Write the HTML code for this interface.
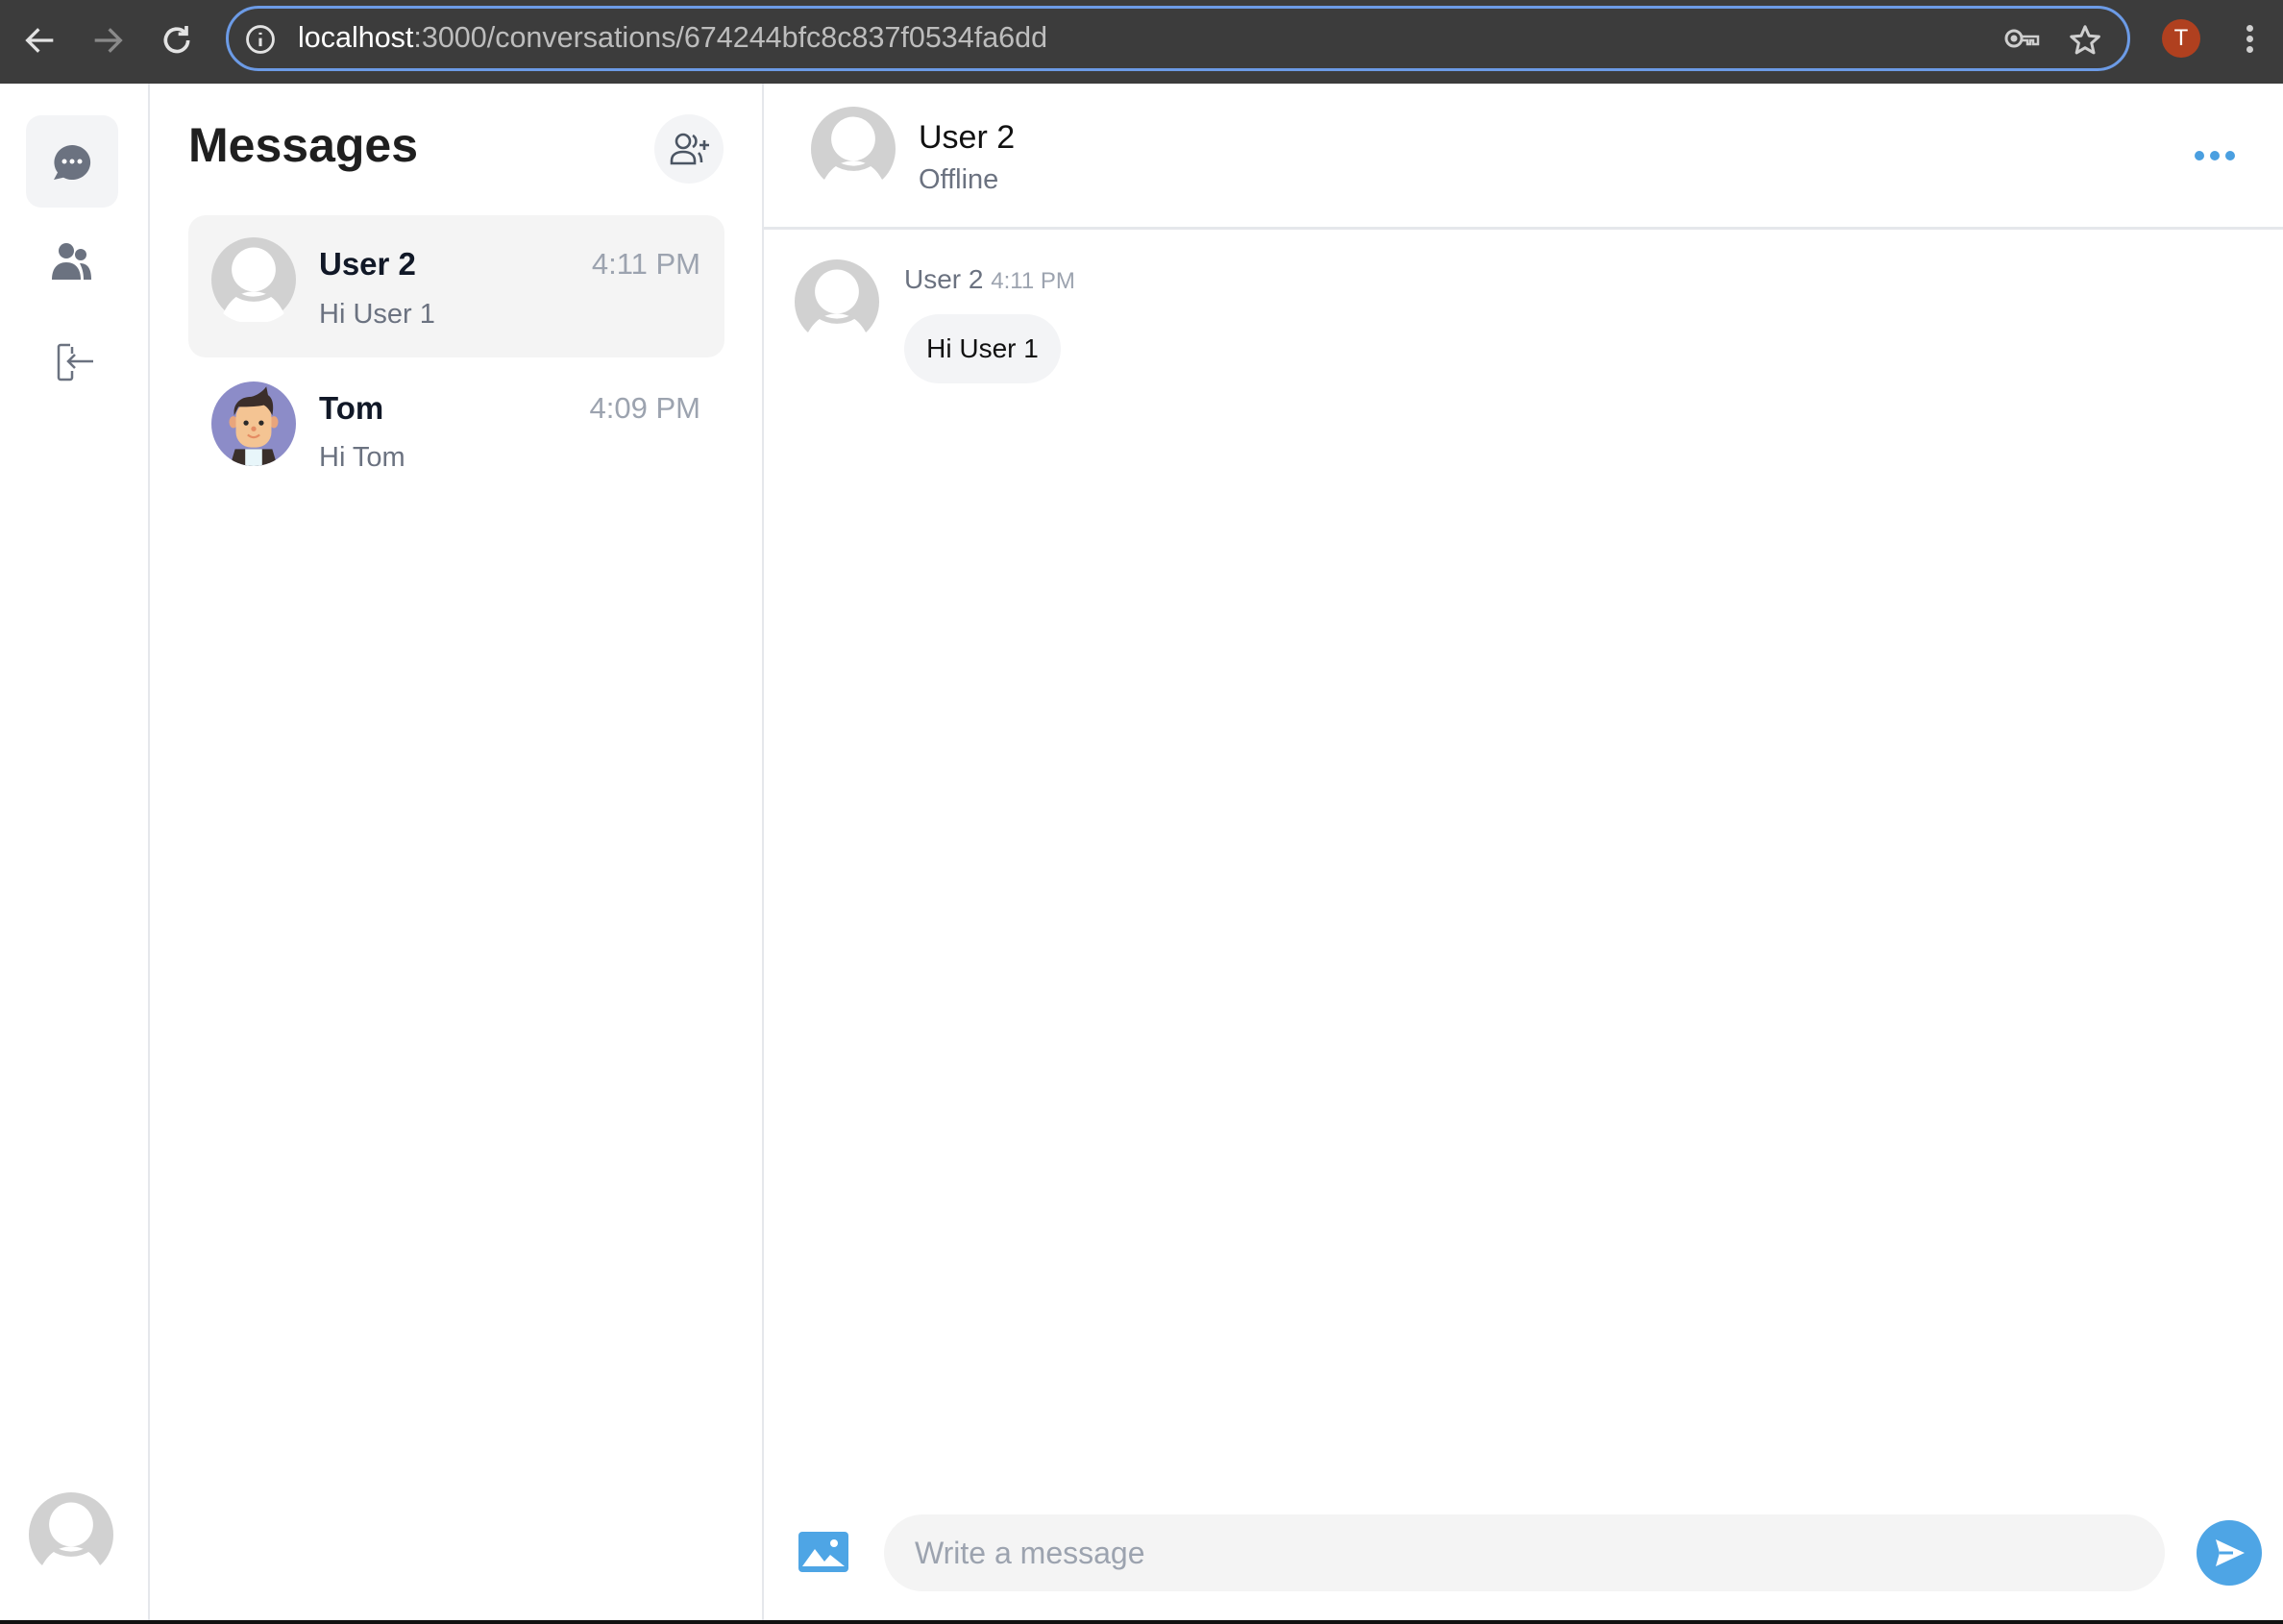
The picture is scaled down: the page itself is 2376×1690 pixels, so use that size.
<!DOCTYPE html>
<html><head><meta charset="utf-8"><style>
*{box-sizing:border-box;margin:0;padding:0}
body{width:2376px;height:1690px;overflow:hidden;background:#fff;font-family:"Liberation Sans",Arial,sans-serif;position:relative}
.abs{position:absolute}
.top{left:0;top:0;width:2376px;height:87px;background:#3c3c3c}
.url{left:235px;top:6px;width:1982px;height:68px;border:3px solid #6c9be6;border-radius:34px}
.urltext{left:310px;top:22px;font-size:30.5px;color:#bdbdbd;white-space:nowrap}
.nav{left:0;top:87px;width:156px;height:1600px;border-right:2px solid #e5e7eb}
.mid{left:156px;top:87px;width:639px;height:1600px;border-right:2px solid #e5e7eb}
.hdr{left:795px;top:87px;width:1581px;height:152px;border-bottom:3px solid #e5e7eb}
.t{white-space:nowrap}
.bottomband{left:0;top:1686px;width:2376px;height:4px;background:#111}
</style></head><body>
<div class="abs top"></div>
<svg class="abs" style="left:22px;top:22px" width="40" height="40" viewBox="0 0 24 24"><path d="M20 12H5M11 5l-7 7 7 7" stroke="#e3e3e3" stroke-width="2" fill="none"/></svg>
<svg class="abs" style="left:92px;top:22px" width="40" height="40" viewBox="0 0 24 24"><path d="M4 12h15M13 5l7 7-7 7" stroke="#8a8a8a" stroke-width="2" fill="none"/></svg>
<svg class="abs" style="left:164px;top:22px" width="40" height="40" viewBox="0 0 24 24"><path d="M19 12a7 7 0 1 1-2-5" stroke="#e3e3e3" stroke-width="2.2" fill="none"/><path d="M18 3v5h-5" stroke="#e3e3e3" stroke-width="2.2" fill="none"/></svg>
<div class="abs url"></div>
<svg class="abs" style="left:254px;top:24px" width="34" height="34" viewBox="0 0 24 24"><circle cx="12" cy="12" r="9.5" stroke="#e3e3e3" stroke-width="2" fill="none"/><path d="M12 11v6M12 7v1.5" stroke="#e3e3e3" stroke-width="2.2"/></svg>
<div class="abs urltext"><span style="color:#fff">localhost</span>:3000/conversations/674244bfc8c837f0534fa6dd</div>
<svg class="abs" style="left:2086px;top:28px" width="38" height="24" viewBox="0 0 38 24"><circle cx="10" cy="12" r="8" stroke="#cfcfcf" stroke-width="3" fill="none"/><circle cx="10" cy="12" r="3.5" fill="#cfcfcf"/><path d="M18 10h17v8h-5v-4h-3v4h-3v-4h-6" stroke="#cfcfcf" stroke-width="2.5" fill="none"/></svg>
<svg class="abs" style="left:2152px;top:24px" width="36" height="36" viewBox="0 0 24 24"><path d="M12 2.5l2.8 6.3 6.8.6-5.1 4.5 1.5 6.7L12 17.1l-5.9 3.5 1.5-6.7-5.1-4.5 6.8-.6z" stroke="#cfcfcf" stroke-width="2" fill="none" stroke-linejoin="round"/></svg>
<div class="abs" style="left:2250px;top:20px;width:40px;height:40px;border-radius:50%;background:#b0401f;color:#fff;font-size:24px;text-align:center;line-height:40px">T</div>
<div class="abs" style="left:2338px;top:26px;width:7px;height:7px;border-radius:50%;background:#cfcfcf"></div>
<div class="abs" style="left:2338px;top:37px;width:7px;height:7px;border-radius:50%;background:#cfcfcf"></div>
<div class="abs" style="left:2338px;top:48px;width:7px;height:7px;border-radius:50%;background:#cfcfcf"></div>

<div class="abs nav"></div>
<div class="abs mid"></div>
<div class="abs hdr"></div>

<div class="abs" style="left:27px;top:120px;width:96px;height:96px;border-radius:16px;background:#f3f4f6"></div>
<svg class="abs" style="left:54px;top:149px" width="42" height="42" viewBox="0 0 42 42"><path d="M21 2a19 18 0 1 1-9 33.8L2 38l4-7.5A19 18 0 0 1 21 2z" fill="#6b7280"/><circle cx="13" cy="19" r="2.5" fill="#fff"/><circle cx="21" cy="19" r="2.5" fill="#fff"/><circle cx="29" cy="19" r="2.5" fill="#fff"/></svg>
<svg class="abs" style="left:53px;top:252px" width="44" height="40" viewBox="0 0 44 40"><circle cx="16" cy="9" r="8" fill="#6b7280"/><circle cx="31" cy="13" r="6" fill="#6b7280"/><path d="M1 39c0-12 6-18 15-18s15 6 15 18z" fill="#6b7280"/><path d="M30 22c8 0 12 5 12 17h-8c0-8-2-13-4-17z" fill="#6b7280"/></svg>
<svg class="abs" style="left:57px;top:356px" width="42" height="42" viewBox="0 0 42 42"><path d="M16 3H6a2 2 0 0 0-2 2v32a2 2 0 0 0 2 2h10a2 2 0 0 0 2-2v-7M18 12V5" stroke="#6b7280" stroke-width="2.5" fill="none"/><path d="M40 20H14M21 13l-7 7 7 7" stroke="#6b7280" stroke-width="2.5" fill="none"/></svg>
<svg class="abs" style="left:30px;top:1553px" width="88" height="88" viewBox="0 0 100 100"><circle cx="50" cy="50" r="50" fill="#d1d1d1"/><circle cx="50" cy="38" r="26" fill="#fff"/><path d="M14 90c8-17 20-26 36-26s28 9 36 26c-9 8-22 12-36 12s-27-4-36-12z" fill="#fff"/><path d="M28 66c7 5 15 7 22 7s15-2 22-7" stroke="#d1d1d1" stroke-width="6" fill="none"/><rect x="0" y="86" width="100" height="14" fill="#fff"/></svg>

<div class="abs t" style="left:196px;top:122px;font-size:50px;font-weight:bold;color:#1f1f1f">Messages</div>
<div class="abs" style="left:681px;top:119px;width:72px;height:72px;border-radius:50%;background:#f3f4f6"></div>
<svg class="abs" style="left:697px;top:138px" width="42" height="34" viewBox="0 0 42 34"><circle cx="14" cy="9" r="7" stroke="#4b5563" stroke-width="2.6" fill="none"/><path d="M2 32v-3c0-6 5-9 12-9s12 3 12 9v3z" stroke="#4b5563" stroke-width="2.6" fill="none"/><path d="M24 3a7 7 0 0 1 0 12M30 21c2 2 3 5 3 10" stroke="#4b5563" stroke-width="2.6" fill="none"/><path d="M36 8v10M31 13h10" stroke="#4b5563" stroke-width="2.6"/></svg>

<div class="abs" style="left:196px;top:224px;width:558px;height:148px;border-radius:18px;background:#f4f4f4"></div>
<svg class="abs" style="left:220px;top:247px" width="88" height="88" viewBox="0 0 100 100"><circle cx="50" cy="50" r="50" fill="#d1d1d1"/><circle cx="50" cy="38" r="26" fill="#fff"/><path d="M14 90c8-17 20-26 36-26s28 9 36 26c-9 8-22 12-36 12s-27-4-36-12z" fill="#fff"/><path d="M28 66c7 5 15 7 22 7s15-2 22-7" stroke="#d1d1d1" stroke-width="6" fill="none"/></svg>
<div class="abs t" style="left:332px;top:256px;font-size:33px;font-weight:bold;color:#111827">User 2</div>
<div class="abs t" style="left:729px;top:257px;font-size:31px;color:#9ca3af;transform:translateX(-100%)">4:11 PM</div>
<div class="abs t" style="left:332px;top:311px;font-size:29px;color:#6b7280">Hi User 1</div>

<svg class="abs" style="left:220px;top:397px" width="88" height="88" viewBox="0 0 100 100"><defs><clipPath id="c1"><circle cx="50" cy="50" r="50"/></clipPath></defs><circle cx="50" cy="50" r="50" fill="#8c8cc8"/><g clip-path="url(#c1)"><path d="M22 100l6-20h44l6 20z" fill="#3a2f2b"/><path d="M40 80h20v20H40z" fill="#e8f6fa"/><ellipse cx="26" cy="48" rx="5" ry="7" fill="#e8a57c"/><ellipse cx="74" cy="48" rx="5" ry="7" fill="#e8a57c"/><rect x="29" y="24" width="42" height="54" rx="18" fill="#f4c493"/><path d="M27 40c-2-14 8-22 20-22 6-1 14-6 18-12l2 10c6 4 7 13 5 24-3-6-6-10-10-12-10 2-22 2-30 2z" fill="#3b2e2a"/><circle cx="41" cy="49" r="3" fill="#2a2a2a"/><circle cx="59" cy="49" r="3" fill="#2a2a2a"/><circle cx="50" cy="56" r="3" fill="#e58c63"/><path d="M43 63q7 6 14 0" stroke="#e58c63" stroke-width="2.5" fill="none"/></g></svg>
<div class="abs t" style="left:332px;top:406px;font-size:33px;font-weight:bold;color:#111827">Tom</div>
<div class="abs t" style="left:729px;top:407px;font-size:31px;color:#9ca3af;transform:translateX(-100%)">4:09 PM</div>
<div class="abs t" style="left:332px;top:460px;font-size:29px;color:#6b7280">Hi Tom</div>

<svg class="abs" style="left:844px;top:111px" width="88" height="88" viewBox="0 0 100 100"><circle cx="50" cy="50" r="50" fill="#d1d1d1"/><circle cx="50" cy="38" r="26" fill="#fff"/><path d="M14 90c8-17 20-26 36-26s28 9 36 26c-9 8-22 12-36 12s-27-4-36-12z" fill="#fff"/><path d="M28 66c7 5 15 7 22 7s15-2 22-7" stroke="#d1d1d1" stroke-width="6" fill="none"/><rect x="0" y="86" width="100" height="14" fill="#fff"/></svg>
<div class="abs t" style="left:956px;top:124px;font-size:34px;color:#111">User 2</div>
<div class="abs t" style="left:956px;top:171px;font-size:29px;color:#6b7280">Offline</div>
<div class="abs" style="left:2284px;top:157px;width:10px;height:10px;border-radius:50%;background:#4a9fe0"></div>
<div class="abs" style="left:2300px;top:157px;width:10px;height:10px;border-radius:50%;background:#4a9fe0"></div>
<div class="abs" style="left:2316px;top:157px;width:10px;height:10px;border-radius:50%;background:#4a9fe0"></div>

<svg class="abs" style="left:827px;top:270px" width="88" height="88" viewBox="0 0 100 100"><circle cx="50" cy="50" r="50" fill="#d1d1d1"/><circle cx="50" cy="38" r="26" fill="#fff"/><path d="M14 90c8-17 20-26 36-26s28 9 36 26c-9 8-22 12-36 12s-27-4-36-12z" fill="#fff"/><path d="M28 66c7 5 15 7 22 7s15-2 22-7" stroke="#d1d1d1" stroke-width="6" fill="none"/><rect x="0" y="86" width="100" height="14" fill="#fff"/></svg>
<div class="abs t" style="left:941px;top:275px;font-size:28px;color:#6b7280">User 2 <span style="font-size:24px;color:#9ca3af">4:11 PM</span></div>
<div class="abs t" style="left:941px;top:327px;width:163px;height:72px;border-radius:36px;background:#f3f4f6;font-size:28px;color:#111;line-height:72px;text-align:center">Hi User 1</div>

<svg class="abs" style="left:831px;top:1594px" width="52" height="42" viewBox="0 0 52 42"><rect x="0" y="0" width="52" height="42" rx="4" fill="#4ea5e5"/><circle cx="37" cy="12" r="4" fill="#fff"/><path d="M4 36l13-18 10 13 6-7 15 12z" fill="#fff"/></svg>
<div class="abs" style="left:920px;top:1576px;width:1333px;height:80px;border-radius:40px;background:#f4f4f4"></div>
<div class="abs t" style="left:952px;top:1598px;font-size:32px;color:#9ca3af">Write a message</div>
<div class="abs" style="left:2286px;top:1582px;width:68px;height:68px;border-radius:50%;background:#4ea5e5"></div>
<svg class="abs" style="left:2302px;top:1598px" width="36" height="36" viewBox="0 0 36 36"><path d="M4 4l30 14-30 14 4-14z" fill="#fff"/><path d="M8 18h14" stroke="#4ea5e5" stroke-width="3"/></svg>
<div class="abs bottomband"></div>
</body></html>
